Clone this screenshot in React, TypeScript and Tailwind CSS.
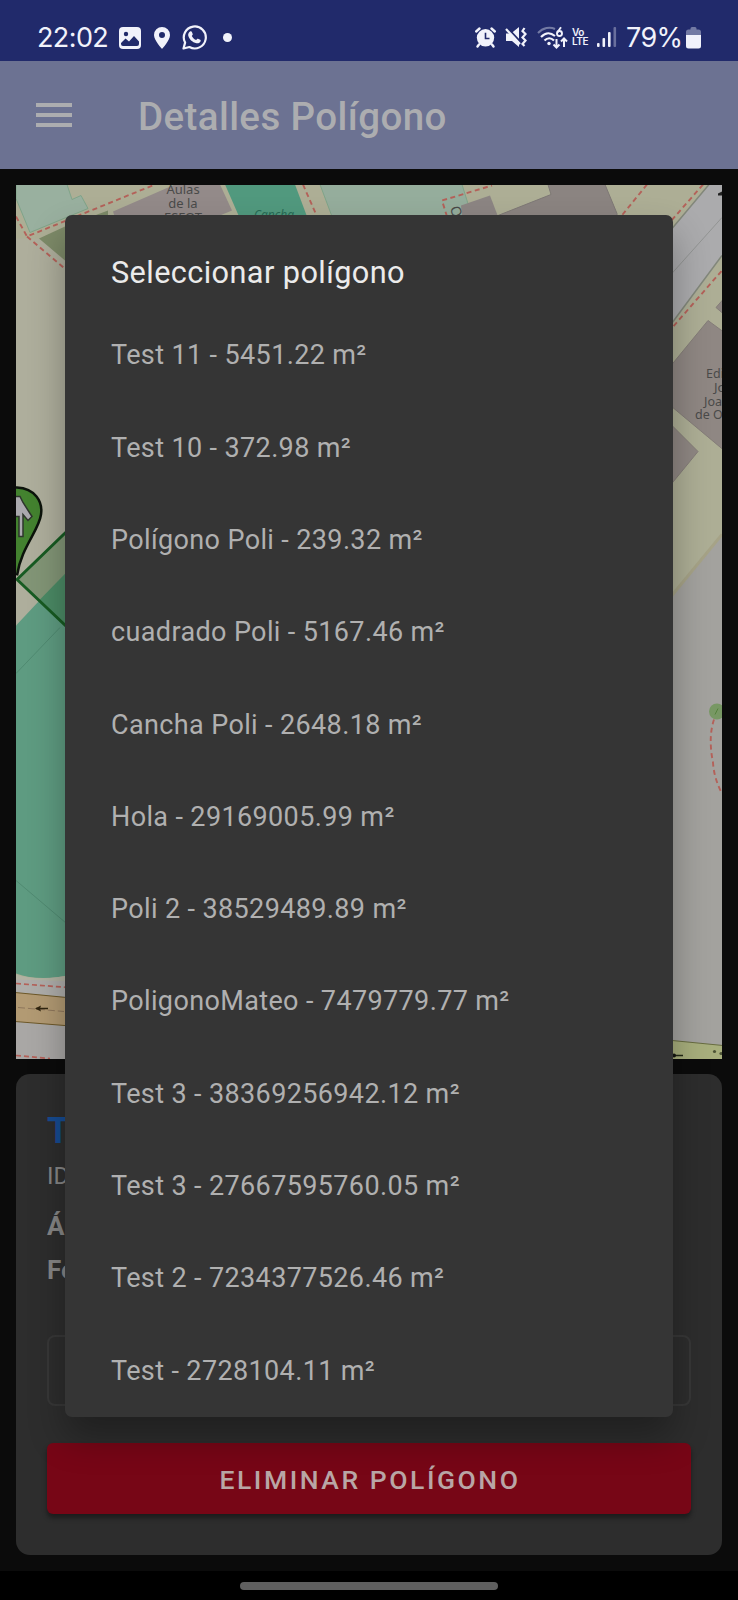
const polygons = [
  'Test 11 - 5451.22 m²',
  'Test 10 - 372.98 m²',
  'Polígono Poli - 239.32 m²',
  'cuadrado Poli - 5167.46 m²',
  'Cancha Poli - 2648.18 m²',
  'Hola - 29169005.99 m²',
  'Poli 2 - 38529489.89 m²',
  'PoligonoMateo - 7479779.77 m²',
  'Test 3 - 38369256942.12 m²',
  'Test 3 - 27667595760.05 m²',
  'Test 2 - 7234377526.46 m²',
  'Test - 2728104.11 m²',
];

function StatusBar() {
  return (
    <div className="flex h-[61px] items-start bg-[#212a6b] pl-[37px] pr-[37px] pt-[22px] text-[#f1f2fb]">
      <span className="w-[82px] whitespace-nowrap font-['Inter'] text-[27px] leading-[32px] tracking-[-0.600px]">22:02</span>
      <svg className="mt-[5px] h-[22px] w-[22px]" viewBox="0 0 22 22">
        <rect width="22" height="22" rx="4" fill="currentColor" />
        <circle cx="7" cy="7" r="2.2" fill="#212a6b" />
        <path d="M2 17v-1l4.500-4.500 3.500 3 5-5.500 5 5.500v2.500a2 2 0 0 1-2 2H4a2 2 0 0 1-2-2z" fill="#212a6b" />
      </svg>
      <svg className="ml-[13px] mt-[5px] h-[22px] w-[16px]" viewBox="0 0 16 22">
        <path fillRule="evenodd" d="M8 0a8 8 0 0 0-8 8c0 5.500 8 14 8 14s8-8.500 8-14a8 8 0 0 0-8-8zm0 5a3 3 0 1 1 0 6 3 3 0 0 1 0-6z" fill="currentColor" />
      </svg>
      <svg className="ml-[12px] mt-[3px] h-[25px] w-[25px]" viewBox="0 0 25 25">
        <path d="M1.500 23.500l1.600-5.900A11 11 0 1 1 7.400 22z" fill="none" stroke="currentColor" strokeWidth="2.200" strokeLinejoin="round" />
        <path d="M8 6.500c.7-.5 1.500-.4 1.800.3l.9 2.200c.2.500-.1 1-.9 1.900 1 2 2.500 3.300 4.400 4.100.8-1 1.200-1.500 1.800-1.300l2.200 1.100c.6.300.6.700.4 1.400-.4 1.500-2.400 2.400-4.100 2-4.200-1-7.500-4.200-8.300-7.800-.2-1.600.6-3.100 1.800-3.900z" fill="currentColor" />
      </svg>
      <span className="ml-[16px] mt-[11px] size-[9px] rounded-full bg-[#f1f2fb]" />
      <svg className="ml-auto mt-[5px] h-[21px] w-[21px]" viewBox="0 0 21 21">
        <circle cx="10.500" cy="10.800" r="8.700" fill="currentColor" />
        <path d="M1.200 4.500l3.300-3M19.800 4.500l-3.300-3M4 17.500l-1.500 2M17 17.500l1.500 2" stroke="currentColor" strokeWidth="2.400" strokeLinecap="round" />
        <path d="M10.500 5.800v5.700h4" fill="none" stroke="#212a6b" strokeWidth="1.600" />
      </svg>
      <svg className="ml-[9px] mt-[5px] h-[21px] w-[22px]" viewBox="0 0 22 21">
        <path d="M1 6.500h5L14 0v20l-7-6H1z" fill="currentColor" />
        <path d="M2 .500l14 15" stroke="#212a6b" strokeWidth="2" />
        <path d="M1 2l14 15" stroke="currentColor" strokeWidth="2.200" />
        <path d="M19.500 1l-2 3 3 3-3 3.500 3 3-3 3.500 2 2" fill="none" stroke="currentColor" strokeWidth="2.200" />
      </svg>
      <svg className="ml-[10px] mt-[4px] h-[24px] w-[31px]" viewBox="0 0 31 24" fill="none" stroke="currentColor">
        <path d="M1 7C6 1.500 13 .5 18 3" strokeWidth="2" opacity=".4" />
        <path d="M4 11c5-5 9-5 14-1M7.500 14.500c3-3 6.500-3 9.500 0" strokeWidth="2.200" />
        <circle cx="12" cy="17.500" r="1.700" fill="currentColor" stroke="none" />
        <path d="M24 1.200l-3.500 5" strokeWidth="1.900" />
        <circle cx="22.500" cy="7.500" r="2.500" strokeWidth="1.900" />
        <path d="M19.500 13v8.500m-3-3l3 3 3-3M27 21v-8.500m-3 3l3-3 3 3" strokeWidth="2" />
      </svg>
      <span className="ml-[4px] mt-[6px] flex w-[18px] flex-col font-['Inter'] text-[10px] font-semibold leading-[9px] tracking-[-0.400px]">
        <span>Vo</span>
        <span>LTE</span>
      </span>
      <svg className="ml-[7px] mt-[5px] h-[20px] w-[20px]" viewBox="0 0 20 20" fill="currentColor">
        <rect y="16" width="2.600" height="4" rx="1" />
        <rect x="5.500" y="11" width="2.600" height="9" rx="1" />
        <rect x="11" y="5" width="2.600" height="15" rx="1" />
        <rect x="16.500" width="2.600" height="20" rx="1" opacity=".35" />
      </svg>
      <span className="ml-[9px] w-[55px] whitespace-nowrap font-['Inter'] text-[27px] leading-[32px] tracking-[-0.600px]">79%</span>
      <svg className="ml-[5px] mt-[5px] h-[22px] w-[15px]" viewBox="0 0 15 22" fill="currentColor">
        <path d="M0 8V5a2.500 2.500 0 0 1 2.500-2.500H4.500V1.500A1.500 1.500 0 0 1 6 0h3a1.500 1.500 0 0 1 1.500 1.500v1h2A2.500 2.500 0 0 1 15 5v3z" opacity=".4" />
        <path d="M0 8h15v11a2.500 2.500 0 0 1-2.500 2.500h-10A2.500 2.500 0 0 1 0 19z" />
      </svg>
    </div>
  );
}

function MapView() {
  return (
    <svg className="block h-[874px] w-[706px]" viewBox="16 184.5 706 874">
      <rect x="16" y="184" width="706" height="875" fill="#adae95" />
      <rect x="16" y="238" width="60" height="400" fill="#aeae9c" />
      <path d="M16 184h51l5 15 9-4 7 13-58 24-14-34z" fill="#99b09f" stroke="#7fa489" />
      <path d="M39 238l26-12 43-16v10l-43 40z" fill="#7d8a68" />
      <path d="M113 211l62-27h45l12 26-17 7h-100z" fill="#938a89" />
      <path d="M225 184l14 32h68l-12-32z" fill="#51997e" />
      <path d="M320 184l12 32h140l-10-32z" fill="#95ad9c" stroke="#7fa489" />
      <path d="M461 205l29-10 8 21h-36z" fill="#8c8583" />
      <path d="M548 184l3 10-53 21v4h119v-6l-12-29z" fill="#8b8481" stroke="#7e7875" />
      <path d="M722 534v525h-60V607z" fill="#a3a29e" />
      <path d="M722 534l-60 73" stroke="#a6a387" strokeWidth="3" />
      <path d="M709 184l-47 56v97l60-81v-72z" fill="#ababad" />
      <path d="M709 184l-47 56M662 336l60-81" stroke="#82877a" strokeWidth="1.500" />
      <path d="M662 284l60-67" stroke="#929493" />
      <path d="M718 193l4-2v4h-4z" fill="#222" />
      <g fill="#8f8783" stroke="#847d78">
        <path d="M662 376l46-56 15 11v118l-61-51z" />
        <path d="M716 307l7-8v14z" />
        <path d="M662 415l36 36-36 44z" />
      </g>
      <g fill="none" stroke="#b46159" strokeWidth="1.900" strokeDasharray="5 3.500">
        <path d="M16 216l11 20 128-52M27 236l40 34" />
        <path d="M303 184l14 32M447 216l-5-16 50-15" />
        <path d="M647 184l-26 32M703 184l-35 40M668 332l54-62" />
        <path d="M714 719q-6 18-1 43 1 16 9 31" />
      </g>
      <g fontFamily="Noto Sans, sans-serif" fontSize="13" fill="#4a4a49">
        <text x="183" y="193" textAnchor="middle">Aulas</text>
        <text x="183" y="207" textAnchor="middle">de la</text>
        <text x="183" y="221" textAnchor="middle">ESFOT</text>
        <text x="274" y="218" fontSize="12" fontStyle="italic" textAnchor="middle" fill="#276b55">Cancha</text>
        <text x="706" y="377" fontSize="12.500">Edi</text>
        <text x="714" y="391">Jo</text>
        <text x="704" y="405" fontSize="12.500">Joa</text>
        <text x="695" y="418" fontSize="12.500">de O</text>
        <text transform="translate(450 207) rotate(75)" fontSize="14">Ot</text>
      </g>
      <path d="M16 625l60-64v412q-35 9-60 0z" fill="#5e9b81" />
      <path d="M17 579l60-58v116z" fill="#829576" />
      <path d="M39 600l38-39v76z" fill="#4b8a65" />
      <path d="M16 673l44-46M16 880l60 51" stroke="#508a71" />
      <path d="M77 521l-60 58 60 57" fill="none" stroke="#175b22" strokeWidth="3" />
      <path d="M0 487h17c18 1 26 14 24 27-2 16-20 33-24 61" fill="#43822f" stroke="#0c130b" strokeWidth="2.500" />
      <path d="M14 496h6l3 6 9 14-4 4-5-6v22h-4v-20h-5z" fill="#aaa9ae" stroke="#2e362d" strokeWidth="1.500" />
      <path d="M16 974q25 8 60-1v18l-60-6z" fill="#b1b2a2" />
      <path d="M16 979l60 2v18l-60-7z" fill="#aeadaa" />
      <path d="M16 1021l60 5v33H16z" fill="#a9a7a5" />
      <path d="M15 992l62 6v28l-62-5z" fill="#b29a73" stroke="#6d5829" />
      <path d="M18 1007l46 4" stroke="#8e765b" strokeDasharray="7 3" />
      <path d="M36 1008h12" stroke="#302510" strokeWidth="1.500" />
      <path d="M35 1008l6-3-1 3 1 3z" fill="#302510" />
      <path d="M16 983l52 4M16 1055l34 3" stroke="#b46159" strokeWidth="1.700" strokeDasharray="5 3" />
      <circle cx="717" cy="711" r="8" fill="#789864" />
      <path d="M715 714l3-6" stroke="#55813d" />
      <path d="M662 1039l61 6v15h-61z" fill="#a8af7d" stroke="#686d40" />
      <path d="M673 1055h10" stroke="#252a16" strokeWidth="1.500" />
      <circle cx="674" cy="1055" r="2" fill="#151811" />
      <circle cx="714.500" cy="1051" r="1.600" fill="#4d5436" />
      <circle cx="721" cy="1053" r="1.600" fill="#4d5436" />
    </svg>
  );
}

function DetailsCard() {
  return (
    <section className="mt-[15.500px] flex h-[481px] flex-col rounded-[14px] bg-[#2d2d2d] px-[31px] text-[#858585]">
      <h2 className="mt-[36px] text-[36px] font-bold leading-[42px] text-[#164b91]">Test</h2>
      <p className="mt-[9px] text-[24px] leading-[30px]">ID</p>
      <p className="mt-[18px] text-[26px] font-bold leading-[34px]">Área</p>
      <p className="mt-[10px] text-[26px] font-bold leading-[34px]">Fecha</p>
      <div className="mt-[48px] h-[71px] rounded-[8px] border-2 border-[#373737]" />
      <button className="mt-[37px] h-[71px] rounded-[6px] bg-[#770616] pl-[2px] pt-[2px] text-[26.500px] font-medium tracking-[2.550px] text-[#b9a6a6] shadow-[0_4px_5px_rgba(0,0,0,0.4)]">
        ELIMINAR POLÍGONO
      </button>
    </section>
  );
}

function PolygonDialog() {
  return (
    <div role="dialog" className="absolute left-[65px] top-[215px] flex h-[1202px] w-[608px] flex-col rounded-[7px] bg-[#353535] px-[46px] shadow-[0_20px_36px_rgba(0,0,0,0.3)]">
      <h2 className="mt-[36.500px] h-[58px] text-[30.700px] leading-[42px] tracking-[0.400px] text-[#ebebeb]">Seleccionar polígono</h2>
      <ul>
        {polygons.map((label) => (
          <li key={label} className="flex h-[92.300px] items-center whitespace-nowrap text-[27px] tracking-[0.370px] text-[#b0b0b0]">
            {label}
          </li>
        ))}
      </ul>
    </div>
  );
}

export default function App() {
  return (
    <div className="relative flex h-[1600px] w-[738px] flex-col overflow-hidden bg-[#0b0b0b] font-['Roboto',sans-serif]">
      <StatusBar />
      <header className="flex h-[108px] items-center bg-[#6c7292] pl-[36px] text-[#acadb0]">
        <div className="flex w-[36px] flex-col gap-[6px]">
          <span className="h-[4px] bg-[#acadb0]" />
          <span className="h-[4px] bg-[#acadb0]" />
          <span className="h-[4px] bg-[#acadb0]" />
        </div>
        <h1 className="ml-[66px] pt-[4px] text-[38.500px] font-medium leading-[48px] tracking-[0.400px]">Detalles Polígono</h1>
      </header>
      <main className="flex flex-1 flex-col px-[16px] pt-[15.500px]">
        <MapView />
        <DetailsCard />
      </main>
      <footer className="flex h-[29px] justify-center bg-black pt-[11px]">
        <span className="h-[8px] w-[258px] rounded-full bg-[#5f5f5f]" />
      </footer>
      <PolygonDialog />
    </div>
  );
}
